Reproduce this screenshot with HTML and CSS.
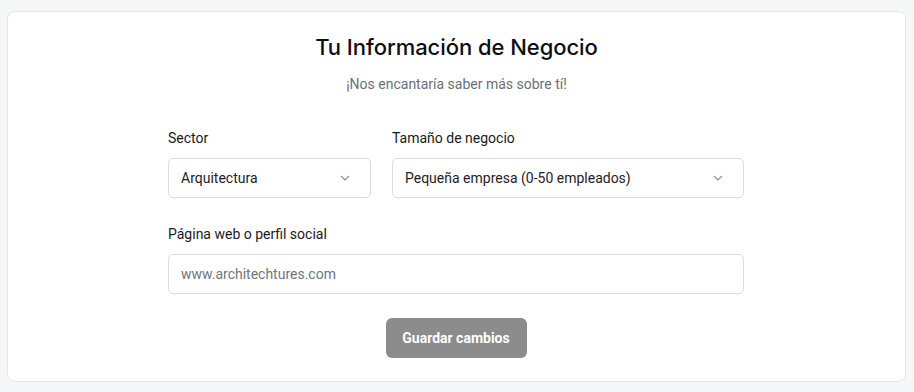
FILE: index.html
```html
<!DOCTYPE html>
<html lang="es">
<head>
    <meta charset="UTF-8">
    <title>Tu Información de Negocio</title>
    <link rel="stylesheet" href="styles.css">
</head>
<body>
    <!-- Business info card -->
    <div class="card">
        <h1 class="card-title">Tu Información de Negocio</h1>
        <p class="card-subtitle">¡Nos encantaría saber más sobre tí!</p>

        <form class="info-form">
            <div class="form-row">
                <div class="field">
                    <label class="field-label">Sector</label>
                    <div class="select-box">
                        <span>Arquitectura</span>
                        <svg class="chevron" width="10" height="6" viewBox="0 0 10 6"><path d="M1 1l4 4 4-4" fill="none" stroke="#8a8f98" stroke-width="1.2"/></svg>
                    </div>
                </div>
                <div class="field">
                    <label class="field-label">Tamaño de negocio</label>
                    <div class="select-box">
                        <span>Pequeña empresa (0-50 empleados)</span>
                        <svg class="chevron" width="10" height="6" viewBox="0 0 10 6"><path d="M1 1l4 4 4-4" fill="none" stroke="#8a8f98" stroke-width="1.2"/></svg>
                    </div>
                </div>
            </div>

            <div class="field">
                <label class="field-label">Página web o perfil social</label>
                <input class="text-input" type="text" placeholder="www.architechtures.com">
            </div>

            <div class="actions">
                <button type="button" class="save-btn">Guardar cambios</button>
            </div>
        </form>
    </div>
</body>
</html>
```

FILE: styles.css
```css
html, body {
    margin: 0;
    padding: 0;
}

body {
    background: #f6f7f9;
    padding: 11px 8px 10px 7px;
    font-family: Roboto, "Noto Sans", Arial, sans-serif;
    color: #111827;
}

/* Card */
.card {
    background: #ffffff;
    border: 1px solid #e4e6ea;
    border-radius: 8px;
    padding: 21px 0 23px;
}

.card-title {
    font-family: Inter, "Noto Sans", sans-serif;
    font-size: 22px;
    font-weight: 500;
    line-height: 28px;
    letter-spacing: -0.05px;
    text-align: center;
    margin: 0;
    color: #0d0d12;
}

.card-subtitle {
    font-size: 14px;
    line-height: 20px;
    text-align: center;
    color: #6b7078;
    margin: 13px 0 0;
}

/* Form */
.info-form {
    width: 576px;
    padding-right: 1px; /* nudge to line up with the reference */
    margin: 34px auto 0;
}

.form-row {
    display: grid;
    grid-template-columns: 203px 1fr;
    gap: 21px;
    margin-bottom: 26px;
}

.field {
    display: flex;
    flex-direction: column;
}

.field-label {
    font-size: 14px;
    line-height: 20px;
    color: #1a1a1a;
    margin-bottom: 10px;
}

.select-box {
    height: 40px;
    box-sizing: border-box;
    border: 1px solid #d9dce1;
    border-radius: 5px;
    padding: 0 20px 0 12px;
    display: flex;
    align-items: center;
    justify-content: space-between;
    font-size: 14px;
    color: #1f2126;
}

.text-input {
    height: 40px;
    box-sizing: border-box;
    border: 1px solid #d9dce1;
    border-radius: 5px;
    padding: 0 12px;
    font-family: inherit;
    font-size: 14px;
    outline: none;
}

.text-input::placeholder {
    color: #71757c;
}

.actions {
    display: flex;
    justify-content: center;
    margin-top: 24px;
}

.save-btn {
    background: #8c8c8c;
    color: #ffffff;
    border: none;
    border-radius: 6px;
    height: 40px;
    width: 141px;
    font-family: inherit;
    font-size: 14px;
    font-weight: 700;
    cursor: pointer;
}
```
